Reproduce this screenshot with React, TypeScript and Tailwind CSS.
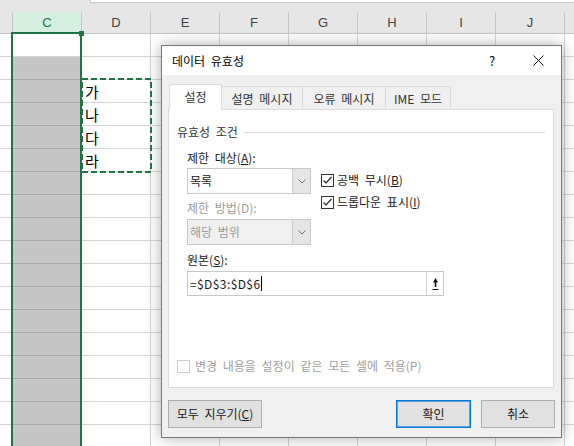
import clsx from 'clsx'

const COLS = ['C', 'D', 'E', 'F', 'G', 'H', 'I', 'J']
const LIST: Record<number, string> = { 2: '가', 3: '나', 4: '다', 5: '라' }
const FONT = "font-['Noto_Sans_CJK_KR',sans-serif]"

function Chevron() {
  return (
    <svg width="8" height="5" viewBox="0 0 8 5">
      <polyline points="0.5,0.5 4,4 7.5,0.5" fill="none" stroke="#707070" strokeWidth="1" />
    </svg>
  )
}

function Check({ checked, disabled }: { checked?: boolean; disabled?: boolean }) {
  return (
    <div
      className={clsx(
        'flex h-[13px] w-[13px] shrink-0 items-center justify-center border bg-white',
        disabled ? 'border-[#cccccc]' : 'border-[#333333]'
      )}
    >
      {checked && (
        <svg width="11" height="11" viewBox="0 0 11 11">
          <polyline points="1.5,5.5 4,8 9.5,2" fill="none" stroke="#222" strokeWidth="1.2" />
        </svg>
      )}
    </div>
  )
}

function Select({ value, disabled }: { value: string; disabled?: boolean }) {
  return (
    <div
      className={clsx(
        'flex h-[26px] w-[124px] border border-[#c8c8c8]',
        disabled ? 'bg-[#f0f0f0] text-[#9a9a9a]' : 'bg-white text-[#1a1a1a]'
      )}
    >
      <div className="flex flex-1 items-center pl-[2px]">{value}</div>
      <div className="flex w-[18px] items-center justify-center border-l border-[#cccccc] bg-[#e5e5e5]">
        <Chevron />
      </div>
    </div>
  )
}

function Dialog() {
  return (
    <div
      className={clsx(
        'absolute left-[161px] top-[45px] flex h-[393px] w-[401px] flex-col border border-[#777777] text-[12px] leading-[16px] [word-spacing:3px] shadow-[0_0_14px_rgba(0,0,0,0.32)]',
        FONT
      )}
    >
      <div className="flex h-[29px] shrink-0 items-center bg-white text-black">
        <div className="flex-1 pl-[10px]">데이터 유효성</div>
        <div className="flex w-[46px] items-center justify-center text-[13px]">?</div>
        <div className="flex w-[46px] items-center justify-center">
          <svg width="11" height="11" viewBox="0 0 11 11">
            <path d="M0.5 0.5 L10.5 10.5 M10.5 0.5 L0.5 10.5" stroke="#111" strokeWidth="1" />
          </svg>
        </div>
      </div>

      <div className="flex flex-1 flex-col bg-[#f0f0f0] px-[6px] pt-[9px] text-[#1a1a1a]">
        <div className="ml-[1px] flex h-[26px] items-end">
          <div className="relative z-10 flex h-[26px] w-[53px] items-center justify-center border border-b-0 border-[#dcdcdc] bg-white pb-[1px] text-[#333]">
            설정
          </div>
          <div className="flex h-[24px] w-[81px] items-center justify-center border-r border-t border-[#dcdcdc] text-[#333]">
            설명 메시지
          </div>
          <div className="flex h-[24px] w-[83px] items-center justify-center border-r border-t border-[#dcdcdc] text-[#333]">
            오류 메시지
          </div>
          <div className="flex h-[24px] w-[65px] items-center justify-center border-r border-t border-[#dcdcdc] text-[#333]">
            IME 모드
          </div>
        </div>

        <div className="-mt-px flex h-[279px] w-[386px] flex-col border border-[#dcdcdc] bg-white pl-[8px] pt-[14px]">
          <div className="flex h-[16px] items-center">
            <span className="text-[#333]">유효성 조건</span>
            <div className="ml-[6px] mr-[8px] h-px flex-1 bg-[#dcdcdc]" />
          </div>

          <div className="flex flex-col pl-[10px]">
            <div className="mt-[10px] h-[16px]">
              제한 대상(<span className="underline">A</span>):
            </div>
            <div className="mt-[2px] flex">
              <div className="flex w-[124px] flex-col">
                <Select value="목록" />
                <div className="mt-[6px] h-[16px] text-[#9a9a9a]">제한 방법(D):</div>
                <div className="mt-[3px]">
                  <Select value="해당 범위" disabled />
                </div>
              </div>
              <div className="ml-[10px] flex flex-col pt-[4px]">
                <div className="flex h-[16px] items-center gap-[3px]">
                  <Check checked />
                  <span>
                    공백 무시(<span className="underline">B</span>)
                  </span>
                </div>
                <div className="mt-[6px] flex h-[16px] items-center gap-[3px]">
                  <Check checked />
                  <span>
                    드롭다운 표시(<span className="underline">I</span>)
                  </span>
                </div>
              </div>
            </div>
            <div className="mt-[7px] h-[16px]">
              원본(<span className="underline">S</span>):
            </div>
            <div className="mt-[3px] flex h-[25px] w-[257px] border border-[#c8c8c8] bg-white">
              <div className="flex flex-1 items-center pl-[2px]">
                <span className="tracking-[0.4px]">=$D$3:$D$6</span>
                <span className="ml-px h-[15px] w-px bg-black" />
              </div>
              <div className="flex w-[17px] items-center justify-center border-l border-[#d0d0d0]">
                <svg width="9" height="14" viewBox="0 0 9 14">
                  <polygon points="4.5,1 2,5.5 7,5.5" fill="#111" />
                  <rect x="3.7" y="5" width="1.6" height="5" fill="#111" />
                  <rect x="1.5" y="12" width="6" height="1" fill="#111" />
                </svg>
              </div>
            </div>
          </div>

          <div className="mt-[62px] flex h-[16px] items-center gap-[5px] text-[#a0a0a0]">
            <Check disabled />
            <span>변경 내용을 설정이 같은 모든 셀에 적용(P)</span>
          </div>
        </div>

        <div className="mt-[12px] flex h-[28px]">
          <div className="flex w-[94px] items-center justify-center border border-[#adadad] bg-[#e1e1e1]">
            모두 지우기(<span className="underline">C</span>)
          </div>
          <div className="flex-1" />
          <div className="flex w-[75px] items-center justify-center border border-[#0078d7] bg-[#e1e1e1] shadow-[inset_0_0_0_1px_#5fa0e3]">
            확인
          </div>
          <div className="ml-[10px] flex w-[74px] items-center justify-center border border-[#adadad] bg-[#e1e1e1]">
            취소
          </div>
        </div>
      </div>
    </div>
  )
}

export default function App() {
  const rows = Array.from({ length: 18 }, (_, i) => i)
  return (
    <div className={clsx('relative h-[446px] w-[574px] overflow-hidden bg-white', FONT)}>
      <div className="flex h-[12px] bg-[#e6e6e6]">
        <div className="w-[90px]" />
        <div className="h-[3px] flex-1 border-b border-l border-[#c6c6c6] bg-white" />
      </div>
      <div className="flex h-[22px] border-b border-[#c6c6c6] bg-[#e6e6e6] font-['Liberation_Sans',sans-serif] text-[13px]">
        <div className="w-[13px] shrink-0 border-r border-[#c6c6c6]" />
        {COLS.map((c) => (
          <div
            key={c}
            className={clsx(
              'flex w-[69px] shrink-0 items-center justify-center border-r border-[#c6c6c6]',
              c === 'C' ? 'bg-[#d3f0e0] text-[#1e7145]' : 'text-[#444]'
            )}
          >
            {c}
          </div>
        ))}
        <div className="flex-1" />
      </div>
      {rows.map((r) => (
        <div key={r} className="flex h-[23px]">
          <div className="w-[13px] shrink-0 border-b border-r border-[#d4d4d4]" />
          {COLS.map((c) => (
            <div
              key={c}
              className={clsx(
                'flex w-[69px] shrink-0 items-center border-b border-r pl-[3px] text-[15px] leading-none text-black',
                c === 'C' && r > 0 ? 'border-[#a8a8a8] bg-[#c6c6c6]' : 'border-[#d4d4d4]'
              )}
            >
              {c === 'D' ? LIST[r] : null}
            </div>
          ))}
          <div className="flex-1 border-b border-[#d4d4d4]" />
        </div>
      ))}

      <div className="absolute left-[11px] top-[32px] h-[430px] w-[71px] border-2 border-[#217346]" />
      <div className="absolute left-[79px] top-[31px] h-[5px] w-[5px] bg-[#217346]" />
      <svg className="absolute left-[81px] top-[78px]" width="71" height="95" viewBox="0 0 71 95">
        <rect x="1" y="1" width="69" height="93" fill="none" stroke="#217346" strokeWidth="2" strokeDasharray="6 3" />
      </svg>

      <Dialog />
    </div>
  )
}
